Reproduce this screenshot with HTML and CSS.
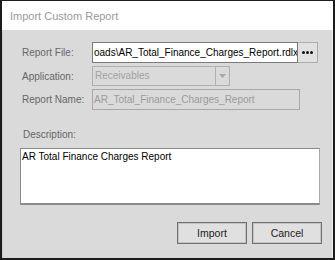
FILE: index.html
```html
<!DOCTYPE html>
<html lang="en">
<head>
    <meta charset="UTF-8">
    <title>Import Custom Report</title>
    <link rel="stylesheet" href="styles.css">
</head>
<body>
    <div class="dialog">
        <div class="title-bar">Import Custom Report</div>

        <div class="dialog-body">
            <div class="form-grid">
                <label class="field-label">Report File:</label>
                <div class="file-row">
                    <div class="text-box file-box">oads\AR_Total_Finance_Charges_Report.rdlx</div>
                    <button class="browse-btn" type="button">
                        <svg width="11" height="3" viewBox="0 0 11 3"><circle cx="1.5" cy="1.5" r="1.5" fill="#111"/><circle cx="5.5" cy="1.5" r="1.5" fill="#111"/><circle cx="9.5" cy="1.5" r="1.5" fill="#111"/></svg>
                    </button>
                </div>

                <label class="field-label">Application:</label>
                <div class="select-box">
                    <span class="select-value">Receivables</span>
                    <span class="select-arrow">
                        <svg width="7" height="4" viewBox="0 0 7 4"><path d="M0 0h7L3.5 4z" fill="#a8a8a8"/></svg>
                    </span>
                </div>

                <label class="field-label">Report Name:</label>
                <div class="text-box name-box">AR_Total_Finance_Charges_Report</div>
            </div>

            <label class="desc-label">Description:</label>
            <div class="desc-box">AR Total Finance Charges Report</div>

            <div class="button-row">
                <button class="dlg-btn" type="button">Import</button>
                <button class="dlg-btn" type="button">Cancel</button>
            </div>
        </div>
    </div>
</body>
</html>
```

FILE: styles.css
```css
body {
    margin: 0;
    font-family: 'Liberation Sans', Arial, sans-serif;
    font-size: 10px;
    color: #000;
}

.dialog {
    width: 335px;
    height: 260px;
    box-sizing: border-box;
    border: 2px solid #1c1c1c;
    border-top-width: 1px;
    display: flex;
    flex-direction: column;
    background: #dadada;
}

.title-bar {
    height: 29px;
    background: #fff;
    color: #9a9a9a;
    font-size: 11px;
    line-height: 31px;
    padding-left: 8px;
}

.dialog-body {
    flex: 1;
    padding: 12px 12px 0 17px;
    border-left: 1px solid #cfcfcf;
    border-right: 1px solid #ececec;
}

/* top three rows */
.form-grid {
    display: grid;
    grid-template-columns: 72px 1fr;
    row-gap: 3px;
    align-items: center;
}

.field-label {
    color: #666;
    padding-left: 2px;
}

.file-row {
    display: flex;
    width: 226px;
}

.text-box {
    height: 21px;
    box-sizing: border-box;
    line-height: 19px;
    padding: 0 1px;
    white-space: nowrap;
    overflow: hidden;
}

.file-box {
    flex: 1;
    min-width: 0;
    background: #fff;
    border: 1px solid #7a7a7a;
}

.browse-btn {
    flex: none;
    width: 20px;
    height: 21px;
    padding: 0;
    border: 1px solid #adadad;
    border-left: none;
    background: #e1e1e1;
    display: flex;
    align-items: center;
    justify-content: center;
}

.select-box {
    width: 138px;
    height: 20px;
    box-sizing: border-box;
    border: 1px solid #b0b0b0;
    display: flex;
    color: #a2a2a2;
}

.select-value {
    flex: 1;
    line-height: 18px;
    padding-left: 2px;
}

.select-arrow {
    width: 13px;
    border-left: 1px solid #b0b0b0;
    display: flex;
    align-items: center;
    justify-content: center;
}

.name-box {
    width: 208px;
    border: 1px solid #a8a8a8;
    color: #9a9a9a;
}

.desc-label {
    display: block;
    color: #666;
    padding-left: 3px;
    margin-top: 19px;
}

.desc-box {
    margin-top: 8px;
    width: 300px;
    height: 57px;
    box-sizing: border-box;
    background: #fff;
    border: 1px solid #8a8a8a;
    border-right-color: #a8a8a8;
    border-bottom-width: 2px;
    padding: 2px 1px;
}

.button-row {
    display: flex;
    justify-content: flex-end;
    gap: 5px;
    margin-top: 17px;
    margin-right: -2px;
}

.dlg-btn {
    width: 70px;
    height: 22px;
    border: 1px solid #6f6f6f;
    box-shadow: inset 0 0 0 1px #c4c4c4;
    background: #e0e0e0;
    font-family: inherit;
    font-size: 10.5px;
    color: #222;
}
```
